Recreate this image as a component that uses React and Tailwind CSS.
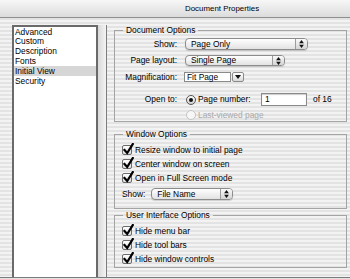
import React from 'react';

const stripes =
  'bg-[repeating-linear-gradient(180deg,#f3f3f3_0px,#f3f3f3_2px,#e3e3e3_2px,#e3e3e3_4px)]';

const UpDown = () => (
  <svg width="5" height="8" viewBox="0 0 6 10">
    <path d="M3 0 L6 4 H0 Z M0 6 H6 L3 10 Z" fill="#111" />
  </svg>
);

const Popup = ({ size, label }) => (
  <div
    className={`${size} flex items-center rounded-[4px] border border-[#8c8c8c] bg-gradient-to-b from-white to-[#e2e2e2] shadow-[0_1px_1px_rgba(0,0,0,0.15)]`}
  >
    <span className="flex-1 pl-[5px] leading-none">{label}</span>
    <div className="h-full w-[12px] flex items-center justify-center border-l border-[#9c9c9c] rounded-r-[3px] bg-gradient-to-b from-[#fafafa] to-[#d4d4d4]">
      <UpDown />
    </div>
  </div>
);

const Check = ({ label }) => (
  <div className="flex items-center h-[10px] mt-[4px] first:mt-[6px]">
    <div className="relative w-[10px] h-[10px] rounded-[2px] border border-[#6b6b6b] bg-gradient-to-b from-white to-[#dedede]">
      <svg className="absolute left-[0px] top-[-3px]" width="11" height="12" viewBox="0 0 11 12">
        <path d="M1.5 7 L4.2 10 L9.8 1" fill="none" stroke="#000" strokeWidth="2.2" strokeLinecap="square" />
      </svg>
    </div>
    <span className="ml-[3px] leading-none">{label}</span>
  </div>
);

const Group = ({ title, className, children }) => (
  <fieldset className={`border border-[#a4a4a4] ${className}`}>
    <legend className="ml-[8px] px-[3px] leading-[10px]">{title}</legend>
    {children}
  </fieldset>
);

const items = ['Advanced', 'Custom', 'Description', 'Fonts', 'Initial View', 'Security'];

export default function App() {
  return (
    <div
      className={`w-[350px] h-[279px] flex flex-col overflow-hidden text-[8.4px] text-black font-['Liberation_Sans',Arial,sans-serif] ${stripes}`}
    >
      {/* title bar */}
      <div className="h-[18px] shrink-0 flex items-center pl-[185px] border-b border-[#8e8e8e] bg-gradient-to-b from-[#f7f7f7] to-[#dcdcdc]">
        <span className="text-[7.9px] leading-none">Document Properties</span>
      </div>

      <div className="flex h-[260px] border-b border-[#7a7a7a]">
        {/* left list */}
        <div className="w-[108px] shrink-0 flex pl-[12px] pt-[7px]">
          <div className="w-[86px] h-full border-2 border-b-0 border-[#6a6a6a] bg-white">
            {items.map((it) => (
              <div
                key={it}
                className={`h-[9.8px] pl-[1px] flex items-center leading-none ${
                  it === 'Initial View' ? 'bg-[#d6d6d6]' : ''
                }`}
              >
                {it}
              </div>
            ))}
          </div>
          <div className="w-[9px] h-full border-r border-[#7c7c7c] bg-gradient-to-r from-[#d9d9d9] to-[#f4f4f4]" />
        </div>

        {/* right panel */}
        <div className="flex-1 pl-[6px] pr-[3px] flex flex-col">
          <Group title="Document Options" className="mt-[7px] h-[97px]">
            <div className="flex items-center mt-[3px] h-[12px]">
              <span className="w-[62px] text-right leading-none">Show:</span>
              <div className="ml-[8px]">
                <Popup size="w-[123px] h-[12px]" label="Page Only" />
              </div>
            </div>
            <div className="flex items-center mt-[5px] h-[11px]">
              <span className="w-[62px] text-right leading-none">Page layout:</span>
              <div className="ml-[8px]">
                <Popup size="w-[100px] h-[11px]" label="Single Page" />
              </div>
            </div>
            <div className="flex items-center mt-[6px] h-[10px]">
              <span className="w-[62px] text-right leading-none">Magnification:</span>
              <div className="ml-[7px] flex h-[10px]">
                <div className="w-[47px] h-full border border-[#8a8a8a] bg-white flex items-center pl-[2px] leading-none">
                  Fit Page
                </div>
                <div className="ml-[1px] w-[12px] h-full border border-[#8a8a8a] rounded-[2px] bg-gradient-to-b from-white to-[#d8d8d8] flex items-center justify-center">
                  <svg width="6" height="4" viewBox="0 0 6 4">
                    <path d="M0 0 H6 L3 4 Z" fill="#111" />
                  </svg>
                </div>
              </div>
            </div>
            <div className="flex items-center mt-[11px] h-[13px]">
              <span className="w-[62px] text-right leading-none">Open to:</span>
              <div className="ml-[9px] w-[10px] h-[10px] rounded-full border border-[#555] bg-gradient-to-b from-white to-[#cfcfcf] flex items-center justify-center">
                <div className="w-[4px] h-[4px] rounded-full bg-[#111]" />
              </div>
              <span className="ml-[2px] w-[63px] leading-none">Page number:</span>
              <div className="w-[46px] h-[13px] border border-[#8a8a8a] shadow-[inset_0_1px_1px_rgba(0,0,0,0.2)] bg-white flex items-center pl-[3px] leading-none">
                1
              </div>
              <span className="ml-[6px] leading-none">of 16</span>
            </div>
            <div className="flex items-center mt-[4px] h-[10px]">
              <div className="ml-[71px] w-[10px] h-[10px] rounded-full border border-[#c4c4c4] bg-[#f7f7f7]" />
              <span className="ml-[2px] leading-none text-[#a9a9a9]">Last-viewed page</span>
            </div>
          </Group>

          <Group title="Window Options" className="mt-[7px] h-[80px]">
            <div className="pl-[7px]">
              <Check label="Resize window to initial page" />
              <Check label="Center window on screen" />
              <Check label="Open in Full Screen mode" />
              <div className="flex items-center mt-[5px] h-[12px]">
                <span className="leading-none">Show:</span>
                <div className="ml-[6px]">
                  <Popup size="w-[82px] h-[12px]" label="File Name" />
                </div>
              </div>
            </div>
          </Group>

          <Group title="User Interface Options" className="mt-[1px] h-[58px]">
            <div className="pl-[7px]">
              <Check label="Hide menu bar" />
              <Check label="Hide tool bars" />
              <Check label="Hide window controls" />
            </div>
          </Group>
        </div>
      </div>
    </div>
  );
}
